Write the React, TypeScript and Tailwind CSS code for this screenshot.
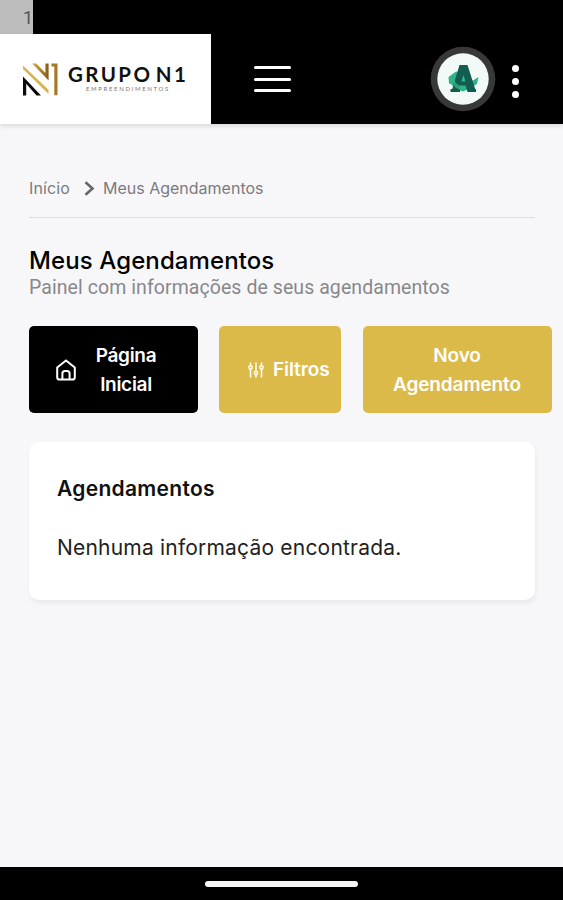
import React from "react";

const Logo: React.FC = () => (
  <div className="flex h-[90px] w-[211px] shrink-0 items-start bg-white pl-[22px]">
    <svg className="mt-[28px] h-[35px] w-[37px] shrink-0" viewBox="0 0 37 35" fill="none">
      <defs>
        <linearGradient id="gold" x1="0" y1="0" x2="1" y2="0">
          <stop offset="0" stopColor="#d9b34d" />
          <stop offset="1" stopColor="#8a5a12" />
        </linearGradient>
      </defs>
      <path d="M1 14.5v19h3.2V21.8L14.5 33.5H19Z" fill="#0a0a0a" />
      <path d="M1 3.5V7l25.5 25v-4.2Z" fill="#d8b550" />
      <path d="M10 1.5h4.2L23.4 11V1.5h3.2v17Z" fill="url(#gold)" />
      <path d="M29.5 1.5h6v31.8h-3.2V4.6h-2.8Z" fill="#a9762a" />
    </svg>
    <div className="ml-[9px] mt-[29px] font-['Lato'] text-[#111]">
      <p className="h-[22px] whitespace-nowrap text-[20.5px] leading-[22px] font-bold tracking-[2.4px] [word-spacing:-4px]">GRUPO N1</p>
      <p className="ml-[18px] whitespace-nowrap text-[6px] leading-[8px] tracking-[1.65px] text-[#777]">EMPREENDIMENTOS</p>
    </div>
  </div>
);

const Avatar: React.FC = () => (
  <svg className="h-[66px] w-[66px] shrink-0" viewBox="0 0 66 66">
    <circle cx="33" cy="33" r="32.3" fill="#383838" />
    <circle cx="33" cy="33" r="25.7" fill="#f2faf8" />
    <path d="M18.5 31 26 25.5l8 2 4 6.5 5 .5 5.5-3.5-1.5 7-4.5 2.5-3 2-6.5 3-8-2.5-3.5-4.5-2.5-1Z" fill="#2fb487" />
    <path
      fillRule="evenodd"
      d="M29.5 19h8l7.7 24H46v3h-8.5l-2-6.5h-5L29 43h1v3h-9.5v-3h1.8Zm4 10-2.3 6.5h4.3Z"
      fill="#115d4f"
    />
    <path d="M23 33.5 28 39l6.5 1.5 1.5 3-4 1.5-7.5-4Z" fill="#2fb487" opacity=".8" />
  </svg>
);

const HomeIcon: React.FC = () => (
  <svg className="h-[22px] w-[20px] shrink-0" viewBox="0 0 20 22" fill="none" stroke="white" strokeWidth="2" strokeLinejoin="round">
    <path d="M1.2 8.6 10 1.4l8.8 7.2v9.6q0 2.4-2.4 2.4H3.6q-2.4 0-2.4-2.4Z" />
    <path d="M6.4 20.5v-6q0-2.6 2.4-2.6h2.4q2.4 0 2.4 2.6v6" />
  </svg>
);

const FilterIcon: React.FC = () => (
  <svg className="h-[16px] w-[16px] shrink-0" viewBox="0 0 16 16" fill="none" stroke="#fffbe8" strokeWidth="1.6" strokeLinecap="round">
    <path d="M2.5 1v2.5M2.5 7.5V15M8 1v8M8 13v2M13.5 1v2.5M13.5 7.5V15" />
    <circle cx="2.5" cy="5.5" r="1.6" />
    <circle cx="8" cy="11" r="1.6" />
    <circle cx="13.5" cy="5.5" r="1.6" />
  </svg>
);

const Header: React.FC = () => (
  <header className="flex h-[90px] shrink-0 items-center bg-black shadow-[0_2px_5px_rgba(0,0,0,0.13)]">
    <Logo />
    <button className="ml-[42.5px] flex w-[37px] flex-col gap-[8.5px]" aria-label="Menu">
      <span className="h-[3px] w-full rounded-full bg-white" />
      <span className="h-[3px] w-full rounded-full bg-white" />
      <span className="h-[3px] w-full rounded-full bg-white" />
    </button>
    <div className="ml-auto flex items-center gap-[15.5px] pr-[44.5px]">
      <Avatar />
      <div className="mt-[4px] flex flex-col gap-[6px]">
        <span className="size-[7px] rounded-full bg-white" />
        <span className="size-[7px] rounded-full bg-white" />
        <span className="size-[7px] rounded-full bg-white" />
      </div>
    </div>
  </header>
);

const App: React.FC = () => (
  <div className="flex h-[900px] w-[563px] flex-col overflow-hidden bg-[#f7f7fa] font-['Inter',sans-serif] text-[#111]">
    <div className="h-[34px] shrink-0 bg-black">
      <div className="h-full w-[33px] bg-[#bdbdbd] pt-[7px] text-right font-['Roboto'] text-[18px] leading-[22px] text-[#555]">1</div>
    </div>
    <Header />

    <main className="flex-1 pl-[29px] pr-[28px] pt-[52px]">
      <nav className="flex h-[42px] items-start border-b border-[#dedee0] text-[16px] leading-[24px] text-[#7b7b7d]">
        <span className="w-[41px] tracking-[0.1px]">Início</span>
        <svg className="ml-[14px] mt-[5px] h-[15px] w-[11px]" viewBox="0 0 11 15" fill="none" stroke="#666" strokeWidth="2.6">
          <path d="m1.5 1.2 7 6.3-7 6.3" />
        </svg>
        <span className="ml-[8px] whitespace-nowrap">Meus Agendamentos</span>
      </nav>

      <h1 className="mt-[28px] h-[30px] whitespace-nowrap text-[24px] leading-[30px] font-medium tracking-[0.1px] text-black">Meus Agendamentos</h1>
      <p className="h-[24px] whitespace-nowrap font-['Roboto'] text-[19.5px] leading-[24px] tracking-[0.07px] text-[#88888a]">
        Painel com informações de seus agendamentos
      </p>

      <div className="mt-[26px] flex w-[523px] gap-[21.5px] text-center text-[19px] leading-[29px] font-semibold tracking-[-0.1px] text-white">
        <button className="flex h-[87px] w-[168.5px] items-center rounded-[5px] bg-black pl-[27px]">
          <HomeIcon />
          <span className="ml-[19px] w-[62px] tracking-[-0.3px]">Página Inicial</span>
        </button>
        <button className="flex h-[87px] w-[122px] items-center rounded-[5px] bg-[#dcba4a] pl-[29px]">
          <FilterIcon />
          <span className="ml-[9px]">Filtros</span>
        </button>
        <button className="h-[87px] w-[189px] rounded-[5px] bg-[#dcba4a] px-[20px]">Novo Agendamento</button>
      </div>

      <section className="mt-[29px] h-[158px] rounded-[10px] bg-white px-[28px] pt-[32px] shadow-[1px_3px_5px_rgba(0,0,0,0.06)]">
        <h2 className="h-[30px] text-[21px] leading-[30px] font-semibold tracking-[0.3px]">Agendamentos</h2>
        <p className="mt-[29px] whitespace-nowrap text-[21px] leading-[30px] tracking-[0.2px] text-[#222]">Nenhuma informação encontrada.</p>
      </section>
    </main>

    <footer className="flex h-[33px] shrink-0 justify-center bg-black pt-[14px]">
      <div className="h-[6px] w-[153px] rounded-full bg-[#f5f5f5]" />
    </footer>
  </div>
);

export default App;
